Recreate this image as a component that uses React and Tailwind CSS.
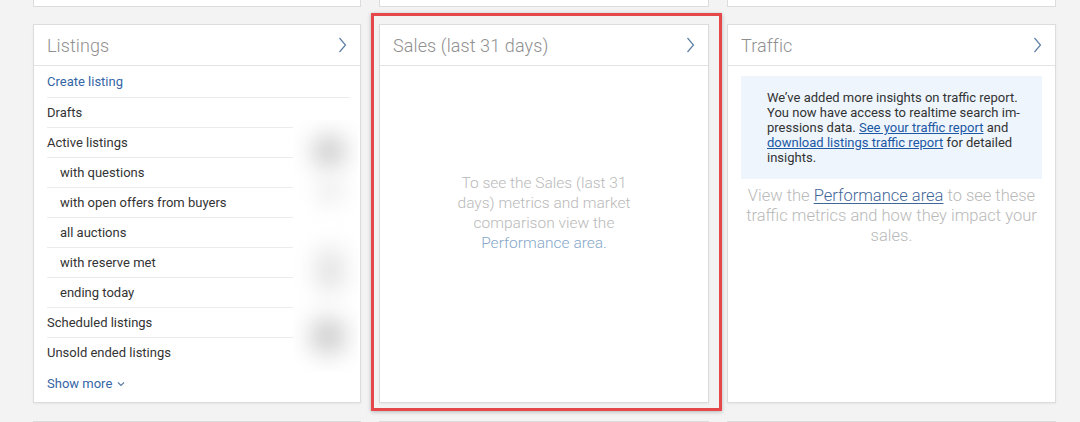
import React from 'react'

const font = { fontFamily: 'Roboto, "Noto Sans", Arial, sans-serif' }

function Chevron() {
    return (
        <svg width="9" height="16" viewBox="0 0 9 16" className="shrink-0">
            <polyline points="1.5,1 7.5,8 1.5,15" fill="none" stroke="#5d7fa3" strokeWidth="1.2" />
        </svg>
    )
}

function CardHeader({ title }) {
    return (
        <div className="h-[41px] flex items-center justify-between pl-[13px] pr-[13px] border-b border-[#e3e3e3]">
            <span className="text-[18px] font-light text-[#8f8f8f] tracking-[0.1px]">{title}</span>
            <Chevron />
        </div>
    )
}

const rows = [
    { label: 'Drafts' },
    { label: 'Active listings' },
    { label: 'with questions', sub: true },
    { label: 'with open offers from buyers', sub: true },
    { label: 'all auctions', sub: true },
    { label: 'with reserve met', sub: true },
    { label: 'ending today', sub: true },
    { label: 'Scheduled listings' },
    { label: 'Unsold ended listings', last: true },
]

function ListingsCard() {
    return (
        <div className="relative bg-white border border-[#dcdcdc] shadow-[0_1px_2px_rgba(0,0,0,0.06)] flex flex-col">
            <CardHeader title="Listings" />
            <div className="pl-[13px] pr-[10px] pt-[1px] text-[13px]">
                <div className="h-[31px] flex items-center border-b border-[#ececec] text-[#3566a6]">Create listing</div>
                {rows.map((r, i) => (
                    <div
                        key={i}
                        className={`h-[30px] flex items-center text-[#333] ${r.last ? '' : 'border-b border-[#ececec]'} ${r.sub ? 'pl-[13px]' : ''}`}
                    >
                        {r.label}
                    </div>
                ))}
                <div className="h-[31px] flex items-center gap-[5px] text-[#3566a6]">
                    Show more
                    <svg width="8" height="6" viewBox="0 0 8 6">
                        <polyline points="1,1.5 4,4.5 7,1.5" fill="none" stroke="#5d7fa3" strokeWidth="1.2" />
                    </svg>
                </div>
            </div>

            {/* blurred numbers */}
            <div className="absolute left-[259px] top-[95px] w-[65px] h-[252px] bg-white overflow-hidden">
                <div className="absolute left-[20px] top-[16px] w-[32px] h-[30px] rounded-full bg-[#c4c4c4] blur-md" />
                <div className="absolute left-[26px] top-[60px] w-[22px] h-[22px] rounded-full bg-[#e3e3e3] blur-md" />
                <div className="absolute left-[24px] top-[128px] w-[26px] h-[44px] rounded-full bg-[#e0e0e0] blur-md" />
                <div className="absolute left-[18px] top-[198px] w-[34px] h-[36px] rounded-full bg-[#c8c8c8] blur-md" />
            </div>
        </div>
    )
}

function SalesCard() {
    return (
        <div className="bg-white border border-[#dcdcdc] shadow-[0_1px_2px_rgba(0,0,0,0.06)] flex flex-col">
            <CardHeader title="Sales (last 31 days)" />
            <div className="pt-[107px]">
                <p className="w-[204px] mx-auto text-center text-[15.5px] leading-[20px] font-light text-[#b9b9b9]">
                    To see the Sales (last 31 days) metrics and market comparison view the{' '}
                    <span className="text-[#86a7c9]">Performance area.</span>
                </p>
            </div>
        </div>
    )
}

function TrafficCard() {
    return (
        <div className="bg-white border border-[#dcdcdc] shadow-[0_1px_2px_rgba(0,0,0,0.06)] flex flex-col">
            <CardHeader title="Traffic" />
            <div className="px-[13px] pt-[10px]">
                <div className="bg-[#eef5fc] h-[103px] pl-[26px] pr-[12px] pt-[14px] text-[13px] leading-[15px] text-[#333]">
                    We’ve added more insights on traffic report. You now have access to realtime search im&shy;pressions data.{' '}
                    <span className="text-[#1c58a4] underline">See your traffic report</span> and{' '}
                    <span className="text-[#1c58a4] underline">download listings traffic report</span> for detailed insights.
                </div>
                <p className="mt-[7px] text-center text-[16.5px] leading-[20px] font-light text-[#b9b9b9]">
                    View the <span className="text-[#3f6699] underline underline-offset-2">Performance area</span> to see these traffic metrics and how they impact your sales.
                </p>
            </div>
        </div>
    )
}

export default function App() {
    return (
        <div className="relative w-[1080px] h-[422px] overflow-hidden bg-[#f3f3f3]" style={font}>
            {/* row above */}
            <div className="grid grid-cols-[328px_330px_329px] gap-[18px] pl-[33px]">
                <div className="h-[7px] bg-white border border-t-0 border-[#dcdcdc]" />
                <div className="h-[7px] bg-white border border-t-0 border-[#dcdcdc]" />
                <div className="h-[7px] bg-white border border-t-0 border-[#dcdcdc]" />
            </div>

            {/* main row */}
            <div className="grid grid-cols-[328px_330px_329px] gap-[18px] pl-[33px] mt-[17px] h-[379px]">
                <ListingsCard />
                <SalesCard />
                <TrafficCard />
            </div>

            {/* row below */}
            <div className="grid grid-cols-[328px_330px_329px] gap-[18px] pl-[33px] mt-[18px]">
                <div className="h-[20px] bg-white border border-b-0 border-[#dcdcdc]" />
                <div className="h-[20px] bg-white border border-b-0 border-[#dcdcdc]" />
                <div className="h-[20px] bg-white border border-b-0 border-[#dcdcdc]" />
            </div>

            {/* highlight annotation */}
            <div className="absolute left-[371px] top-[13px] w-[351px] h-[398px] border-[3px] border-[#e5484b] shadow-[0_1px_4px_rgba(0,0,0,0.25)] pointer-events-none" />
        </div>
    )
}
